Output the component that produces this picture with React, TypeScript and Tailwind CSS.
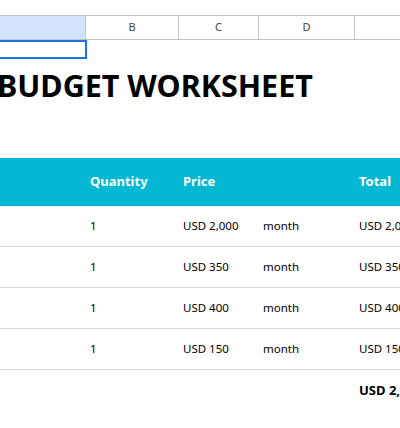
const rows = [
  ["USD 2,000", "USD 2,000"],
  ["USD 350", "USD 350"],
  ["USD 400", "USD 400"],
  ["USD 150", "USD 150"],
];

export default function App() {
  return (
    <div className="w-[400px] h-[428px] overflow-hidden bg-white font-['Open_Sans',sans-serif] text-black">
      <div className="h-[15px]" />
      {/* column headers */}
      <div className="flex h-[25px] border-y border-[#c4c4c4] font-['Liberation_Sans',sans-serif] text-[11px] text-[#444]">
        <div className="w-[86px] bg-[#d3e3fd] border-r border-[#c4c4c4]" />
        <div className="w-[93px] flex items-center justify-center border-r border-[#c4c4c4]">B</div>
        <div className="w-[80px] flex items-center justify-center border-r border-[#c4c4c4]">C</div>
        <div className="w-[96px] flex items-center justify-center border-r border-[#c4c4c4]">D</div>
        <div className="flex-1" />
      </div>
      {/* selected cell */}
      <div className="w-[87px] h-[19px] border-2 border-[#1a73e8] border-l-0" />
      <div className="h-[99px] pt-[4px] text-[30.5px] font-bold leading-[44px] whitespace-nowrap -ml-[3px]">
        BUDGET WORKSHEET
      </div>
      {/* table header */}
      <div className="flex h-[48px] items-center bg-[#04b7d2] text-white font-bold text-[13px] whitespace-nowrap">
        <div className="w-[86px]" />
        <div className="w-[93px] pl-[4px]">Quantity</div>
        <div className="w-[80px] pl-[4px]">Price</div>
        <div className="w-[96px]" />
        <div className="flex-1 pl-[4px]">Total</div>
      </div>
      {rows.map((r, i) => (
        <div key={i} className="flex h-[41px] items-center border-b border-[#d9d9d9] text-[11.5px] whitespace-nowrap">
          <div className="w-[86px]" />
          <div className="w-[93px] pl-[4px]">1</div>
          <div className="w-[80px] pl-[4px]">{r[0]}</div>
          <div className="w-[96px] pl-[4px]">month</div>
          <div className="flex-1 pl-[4px] overflow-hidden">{r[1]}</div>
        </div>
      ))}
      <div className="flex h-[41px] items-center text-[13px] font-bold whitespace-nowrap">
        <div className="w-[355px]" />
        <div className="flex-1 pl-[4px] overflow-hidden">USD 2,900</div>
      </div>
    </div>
  );
}
